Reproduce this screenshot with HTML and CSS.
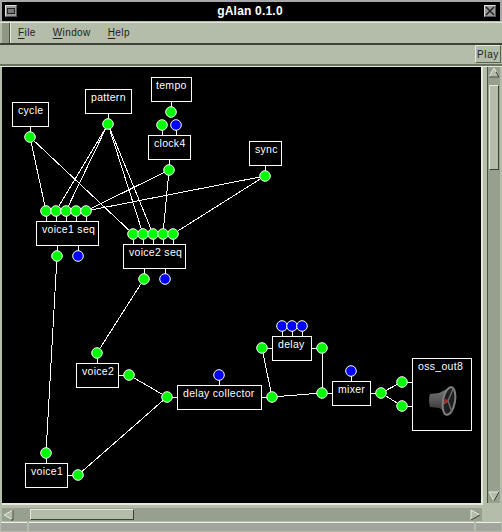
FILE: index.html
```html
<!DOCTYPE html>
<html lang="en">
<head>
<meta charset="utf-8">
<title>gAlan 0.1.0</title>
<link rel="stylesheet" href="styles.css">
</head>
<body>
<div class="window">
  <header class="titlebar">
    <span class="wm-btn wm-menu"><span class="wm-menu-dash"></span></span>
    <span class="title">gAlan 0.1.0</span>
    <span class="wm-btn wm-close">
      <svg width="10" height="10" viewBox="0 0 10 10"><path d="M1 1L9 9M9 1L1 9" stroke="#222" stroke-width="1.500"/></svg>
    </span>
  </header>
  <nav class="menubar">
    <span class="grip"></span>
    <div class="menus">
      <span class="menu"><u>F</u>ile</span>
      <span class="menu"><u>W</u>indow</span>
      <span class="menu"><u>H</u>elp</span>
    </div>
  </nav>
  <div class="toolbar"><button class="play">Play</button></div>
  <main class="workarea">
    <div class="canvas-row">
      <div class="canvas">
        <svg class="patch" width="479" height="436" viewBox="2 67 479 436">
          <g class="wires">
            <line x1="30" y1="137" x2="46" y2="211"/>
            <line x1="30" y1="137" x2="133" y2="234"/>
            <line x1="108" y1="124" x2="56" y2="211"/>
            <line x1="108" y1="124" x2="66" y2="211"/>
            <line x1="108" y1="124" x2="143" y2="234"/>
            <line x1="108" y1="124" x2="153" y2="234"/>
            <line x1="169" y1="170" x2="86" y2="211"/>
            <line x1="169" y1="170" x2="163" y2="234"/>
            <line x1="265" y1="176" x2="86" y2="211"/>
            <line x1="265" y1="176" x2="173" y2="234"/>
            <line x1="57" y1="256" x2="46" y2="453"/>
            <line x1="144" y1="279" x2="97" y2="353"/>
            <line x1="129" y1="375" x2="167" y2="397"/>
            <line x1="78" y1="475" x2="167" y2="397"/>
            <line x1="262" y1="348" x2="272" y2="397"/>
            <line x1="272" y1="397" x2="322" y2="393"/>
            <line x1="322" y1="348" x2="322" y2="393"/>
            <line x1="381" y1="393" x2="402" y2="382"/>
            <line x1="381" y1="393" x2="402" y2="406"/>
          </g>
          <g class="stubs">
            <path d="M171.500 101V112M108.500 113V124M30.500 126V137M162.500 125V135M176.500 125V135M169.500 159V170M265.500 165V176"/>
            <path d="M46.500 211V221M56.500 211V221M66.500 211V221M76.500 211V221M86.500 211V221M57.500 245V256M78.500 245V256"/>
            <path d="M133.500 234V244M143.500 234V244M153.500 234V244M163.500 234V244M173.500 234V244M144.500 268V279M165.500 268V279"/>
            <path d="M97.500 353V363M46.500 453V463M219.500 375V385M282.500 326V336M292.500 326V336M302.500 326V336M351.500 371V381"/>
            <path d="M119 375.500H129M68 475.500H78M167 397.500H177M262 397.500H272M262 348.500H272M312 348.500H322M322 393.500H332M371 393.500H381M402 382.500H412M402 406.500H412"/>
          </g>
          <g class="boxes">
            <rect x="151.500" y="77.500" width="40" height="24"/>
            <rect x="85.500" y="89.500" width="46" height="24"/>
            <rect x="12.500" y="102.500" width="36" height="24"/>
            <rect x="148.500" y="135.500" width="42" height="24"/>
            <rect x="249.500" y="141.500" width="32" height="24"/>
            <rect x="36.500" y="221.500" width="62" height="24"/>
            <rect x="123.500" y="244.500" width="62" height="24"/>
            <rect x="76.500" y="363.500" width="42" height="24"/>
            <rect x="25.500" y="463.500" width="42" height="24"/>
            <rect x="177.500" y="385.500" width="84" height="24"/>
            <rect x="272.500" y="336.500" width="39" height="24"/>
            <rect x="332.500" y="381.500" width="38" height="24"/>
            <rect x="412.500" y="358.500" width="59" height="72"/>
          </g>
          <g class="labels">
            <text x="156" y="89">tempo</text>
            <text x="91" y="101">pattern</text>
            <text x="18" y="114">cycle</text>
            <text x="154" y="147">clock4</text>
            <text x="255" y="153">sync</text>
            <text x="42" y="233">voice1 seq</text>
            <text x="129" y="256">voice2 seq</text>
            <text x="82" y="375">voice2</text>
            <text x="31" y="475">voice1</text>
            <text x="183" y="397">delay collector</text>
            <text x="278" y="348">delay</text>
            <text x="338" y="393">mixer</text>
            <text x="418" y="370">oss_out8</text>
          </g>
          <g class="ports-out">
            <circle cx="171" cy="112"/><circle cx="108" cy="124"/><circle cx="30" cy="137"/>
            <circle cx="162" cy="125"/><circle cx="169" cy="170"/><circle cx="265" cy="176"/>
            <circle cx="46" cy="211"/><circle cx="56" cy="211"/><circle cx="66" cy="211"/><circle cx="76" cy="211"/><circle cx="86" cy="211"/>
            <circle cx="133" cy="234"/><circle cx="143" cy="234"/><circle cx="153" cy="234"/><circle cx="163" cy="234"/><circle cx="173" cy="234"/>
            <circle cx="57" cy="256"/><circle cx="144" cy="279"/><circle cx="97" cy="353"/><circle cx="129" cy="375"/>
            <circle cx="46" cy="453"/><circle cx="78" cy="475"/><circle cx="167" cy="397"/><circle cx="272" cy="397"/>
            <circle cx="262" cy="348"/><circle cx="322" cy="348"/><circle cx="322" cy="393"/><circle cx="381" cy="393"/>
            <circle cx="402" cy="382"/><circle cx="402" cy="406"/>
          </g>
          <g class="ports-ctl">
            <circle cx="176" cy="125"/><circle cx="78" cy="256"/><circle cx="165" cy="279"/><circle cx="219" cy="375"/>
            <circle cx="282" cy="326"/><circle cx="292" cy="326"/><circle cx="302" cy="326"/><circle cx="351" cy="371"/>
          </g>
          <g class="speaker">
            <defs>
              <linearGradient id="cone" x1="0" y1="0" x2="0" y2="1">
                <stop offset="0" stop-color="#777"/><stop offset="0.5" stop-color="#555"/><stop offset="1" stop-color="#2a2a2a"/>
              </linearGradient>
            </defs>
            <path d="M430 394L439 393L449 388V414L439 408L430 407Q428 400 430 394Z" fill="url(#cone)"/>
            <ellipse cx="449" cy="401" rx="6" ry="14" transform="rotate(10 449 401)" fill="#1e1e1e" stroke="#808080" stroke-width="2"/>
            <path d="M448 401L453 389M448 401L443 404M448 401L452 412" stroke="#6a6a6a" stroke-width="1.500"/>
            <circle cx="446" cy="401" r="2" fill="#b02828"/>
          </g>
        </svg>
      </div>
      <div class="vscroll">
        <span class="arrow"><svg width="12" height="11" viewBox="0 0 12 11"><path d="M6 1L11 10H1Z" fill="#b3bda9" stroke="#e4e9dc"/><path d="M1 10H11L8 5" fill="none" stroke="#2c3128"/></svg></span>
        <span class="vthumb"></span>
        <span class="fill"></span>
        <span class="arrow"><svg width="12" height="11" viewBox="0 0 12 11"><path d="M1 1H11L6 10Z" fill="#b3bda9" stroke="#e4e9dc"/><path d="M11 1L6 10" fill="none" stroke="#2c3128"/></svg></span>
      </div>
    </div>
    <div class="hscroll-row">
      <div class="hscroll">
        <span class="arrow"><svg width="11" height="12" viewBox="0 0 11 12"><path d="M1 6L10 1V11Z" fill="#b3bda9" stroke="#e4e9dc"/><path d="M10 1V11H8" fill="none" stroke="#2c3128"/></svg></span>
        <span class="hthumb"></span>
        <span class="fill"></span>
        <span class="arrow"><svg width="11" height="12" viewBox="0 0 11 12"><path d="M1 1L10 6L1 11Z" fill="#b3bda9" stroke="#e4e9dc"/><path d="M10 6L1 11" fill="none" stroke="#2c3128"/></svg></span>
      </div>
    </div>
    <footer class="statusbar">
      <span class="status status-a"></span>
      <span class="status status-b"></span>
      <span class="status status-c"></span>
    </footer>
  </main>
</div>
</body>
</html>
```
FILE: styles.css
```css
html, body { margin: 0; padding: 0; background: #000; }
.window { width: 502px; height: 532px; display: flex; flex-direction: column; background: #b3bda9; overflow: hidden; font-family: "Liberation Sans", sans-serif; }
.titlebar { height: 21px; box-sizing: border-box; background: #000; border-top: 2px solid #a8a8a8; border-left: 2px solid #a8a8a8; border-right: 2px solid #a8a8a8; display: flex; align-items: center; justify-content: space-between; padding: 0 4px 2px 3px; }
.title { color: #fff; font: bold 12px "Liberation Sans", sans-serif; letter-spacing: 0.2px; margin-left: -1px; }
.wm-btn { width: 12px; height: 12px; box-sizing: border-box; background: #999; border: 1px solid; border-color: #ddd #555 #555 #ddd; display: flex; align-items: center; justify-content: center; }
.wm-menu-dash { width: 8px; height: 6px; background: #777; border: 1px solid #222; box-sizing: border-box; }
.menubar { height: 23px; margin-top: 1px; box-sizing: border-box; display: flex; border-top: 1px solid #e0e5d8; border-bottom: 2px solid #3c4238; }
.grip { width: 7px; margin-left: 2px; background: radial-gradient(circle, #e6eadd 40%, #8f9885 45%) 0 0 / 2px 2px; box-shadow: 1px 0 0 #4a5244, 2px 0 0 #e4e9dc; }
.menus { display: flex; gap: 17px; padding: 3px 9px; font-size: 10px; line-height: 14px; letter-spacing: 0.4px; color: #222; }
.menu u { text-underline-offset: 2px; }
.toolbar { height: 21px; box-sizing: border-box; display: flex; justify-content: flex-end; align-items: flex-start; border-bottom: 2px solid #69735f; }
.play { width: 26px; height: 18px; margin: 0 1px 0 0; padding: 0; background: #b3bda9; color: #222; border: 1px solid; border-color: #e4e9dc #5a6350 #5a6350 #e4e9dc; font: 10px "Liberation Sans", sans-serif; letter-spacing: 0.6px; }
.workarea { flex: 1; display: flex; flex-direction: column; padding: 0 2px; min-height: 0; border-top: 1px solid #e4e9dc; }
.canvas-row { display: flex; gap: 3px; height: 438px; }
.canvas { width: 479px; height: 436px; background: #000; flex: none; border-right: 2px solid #e4e9dc; border-bottom: 2px solid #e4e9dc; }
.patch { display: block; }
.wires line { stroke: #fff; stroke-width: 1; shape-rendering: crispEdges; }
.stubs path { stroke: #fff; stroke-width: 1; fill: none; shape-rendering: crispEdges; }
.boxes rect { fill: #000; stroke: #fff; stroke-width: 1; shape-rendering: crispEdges; }
.labels text { fill: #fff; font: 10.500px "Liberation Sans", sans-serif; letter-spacing: 0.300px; }
.ports-out circle { r: 5.300px; fill: #0f0; stroke: #fff; stroke-width: 1; }
.ports-ctl circle { r: 5.300px; fill: #00f; stroke: #fff; stroke-width: 1; }
.vscroll { width: 13px; height: 436px; margin-left: 1px; background: #97a08f; display: flex; flex-direction: column; border-left: 1px solid #4a5244; box-sizing: border-box; }
.vscroll .arrow { height: 12px; display: flex; justify-content: center; }
.vthumb { height: 85px; margin: 6px 1px 0 1px; background: #b3bda9; border: 1px solid; border-color: #e4e9dc #3c4238 #3c4238 #e4e9dc; box-sizing: border-box; }
.fill { flex: 1; }
.hscroll-row { display: flex; height: 16px; padding-top: 3px; box-sizing: border-box; }
.hscroll { width: 480px; height: 13px; background: #97a08f; display: flex; align-items: center; padding-left: 1px; box-sizing: border-box; }
.hscroll .arrow { width: 12px; display: flex; }
.hthumb { width: 104px; height: 11px; margin-left: 15px; background: #b3bda9; border: 1px solid; border-color: #e4e9dc #3c4238 #3c4238 #e4e9dc; box-sizing: border-box; }
.statusbar { display: flex; gap: 2px; height: 9px; margin: 1px -1px 0; }
.status { background: #a2a49e; border-top: 1px solid #eef0ea; box-sizing: border-box; height: 9px; }
.status-a { width: 26px; }
.status-b { width: 445px; }
.status-c { width: 25px; }
```
